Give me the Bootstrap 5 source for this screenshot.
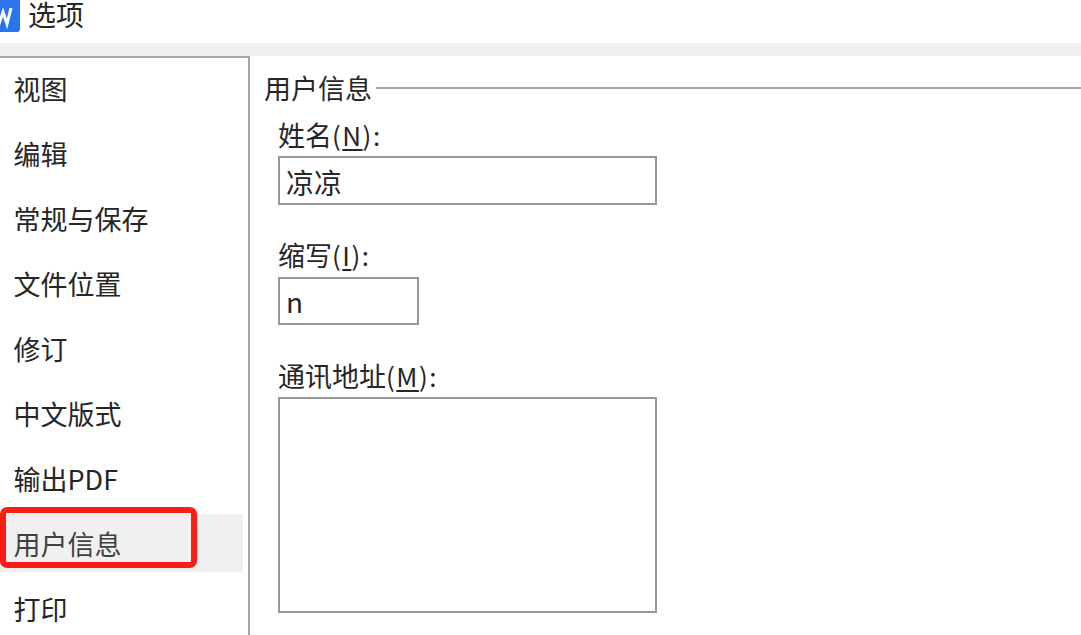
<!DOCTYPE html>
<html lang="zh-CN">
<head>
<meta charset="utf-8">
<title>选项</title>
<link href="https://cdn.jsdelivr.net/npm/bootstrap@5.3.0/dist/css/bootstrap.min.css" rel="stylesheet">
<style>
html,body{height:635px;overflow:hidden;background:#fff}
body{font-family:"Liberation Sans","Noto Sans CJK SC",sans-serif;color:#262626;font-size:26px;line-height:36px}
.cjk{font-family:"Noto Sans CJK SC",sans-serif}
.titlebar{height:43px;gap:8px;align-items:flex-start}
.appicon{width:20px;height:32px;flex:none}
.titletext{font-size:28px;line-height:28px}
.strip{height:13px;background:#f0f0f0}
.mainarea{height:579px}
.sidepane{width:250px;flex:none;border-top:2px solid #a6a6a6;border-right:2px solid #a6a6a6;position:relative}
.navitem{height:65px;line-height:61px;padding-left:13.5px;font-size:27px;color:#262626;display:block}
.navitem.current{background:#f0f0f0;margin-right:5px;height:58px;line-height:60px;margin-top:1px;margin-bottom:6px;color:#404040}
.redmark{position:absolute;left:0;top:449px;width:197px;height:61px;border:6px solid #fa1e14;border-radius:7px;background:transparent}
.formpane{padding:14px 0 0 14px;min-width:0}
.grouphead{height:36px;gap:4px;font-size:27px;line-height:36px}
.groupline{height:2px;background:#a6a6a6;flex:1}
.fieldarea{padding-left:14px;padding-top:11px}
.fieldlabel{line-height:36px;height:36px;margin:0;display:block;font-size:27px;white-space:nowrap}
.keyhint{letter-spacing:1.5px;font-size:26px}
.keyhint u{text-underline-offset:3px}
.boxfield{border:2px solid #969696;border-radius:0;background:#fff;padding:0 6px;font-size:28px;color:#262626;display:block;outline:0;font-family:inherit}
.fieldname{width:379px;height:49px;margin-top:3px;margin-bottom:32px;padding-top:2px}
.fieldabbr{width:141px;height:48px;margin-top:4px;margin-bottom:33px}
.fieldaddr{width:379px;height:216px;margin-top:3px;resize:none}
</style>
</head>
<body>
<div class="titlebar d-flex">
  <svg class="appicon" viewBox="0 0 20 32" aria-hidden="true">
    <rect x="-8" y="-6" width="28" height="38" rx="3" fill="#2a75ec"/>
    <path d="M-5 8 L-1 24 L3 12 L7 24 L11 8" fill="none" stroke="#fff" stroke-width="3"/>
  </svg>
  <span class="titletext cjk">选项</span>
</div>
<div class="strip"></div>
<div class="mainarea d-flex">
  <nav class="sidepane cjk">
    <a class="navitem text-decoration-none">视图</a>
    <a class="navitem text-decoration-none">编辑</a>
    <a class="navitem text-decoration-none">常规与保存</a>
    <a class="navitem text-decoration-none">文件位置</a>
    <a class="navitem text-decoration-none">修订</a>
    <a class="navitem text-decoration-none">中文版式</a>
    <a class="navitem text-decoration-none">输出PDF</a>
    <a class="navitem current text-decoration-none">用户信息</a>
    <a class="navitem text-decoration-none">打印</a>
    <div class="redmark"></div>
  </nav>
  <section class="formpane flex-grow-1 cjk">
    <div class="grouphead d-flex align-items-center"><span>用户信息</span><div class="groupline"></div></div>
    <div class="fieldarea">
      <label class="fieldlabel">姓名<span class="keyhint">(<u>N</u>):</span></label>
      <input class="boxfield fieldname" type="text" value="凉凉">
      <label class="fieldlabel">缩写<span class="keyhint">(<u>I</u>):</span></label>
      <input class="boxfield fieldabbr" type="text" value="n">
      <label class="fieldlabel">通讯地址<span class="keyhint">(<u>M</u>):</span></label>
      <textarea class="boxfield fieldaddr"></textarea>
    </div>
  </section>
</div>
<script src="https://cdn.jsdelivr.net/npm/bootstrap@5.3.0/dist/js/bootstrap.bundle.min.js"></script>
</body>
</html>
